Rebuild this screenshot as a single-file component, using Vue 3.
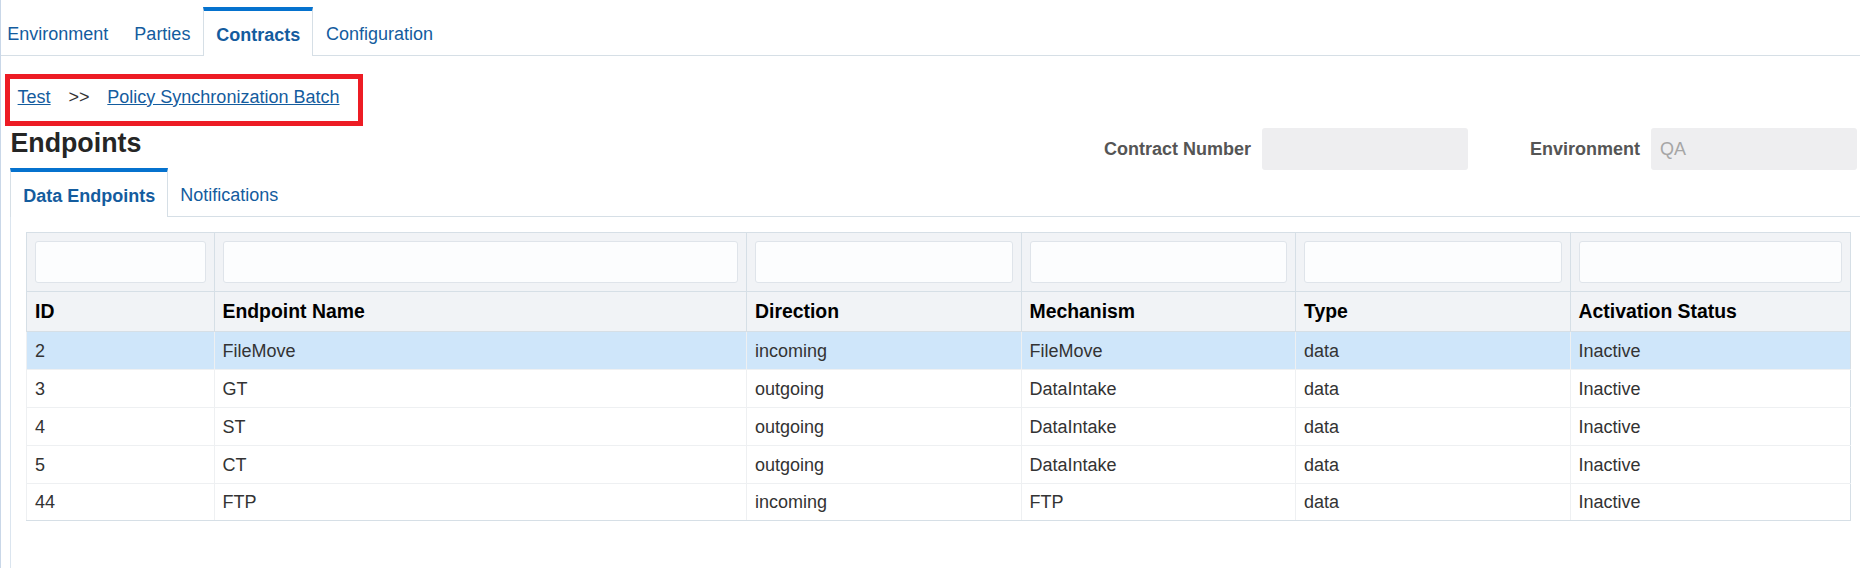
<script setup>
const topTabs = [
  { label: 'Environment' },
  { label: 'Parties' },
  { label: 'Contracts', active: true },
  { label: 'Configuration' }
]
const subTabs = [
  { label: 'Data Endpoints', active: true },
  { label: 'Notifications' }
]
const columns = [
  { label: 'ID', width: 187.5 },
  { label: 'Endpoint Name', width: 532.5 },
  { label: 'Direction', width: 274.5 },
  { label: 'Mechanism', width: 274.5 },
  { label: 'Type', width: 274.5 },
  { label: 'Activation Status', width: 280.5 }
]
const rows = [
  { id: 2, name: 'FileMove', direction: 'incoming', mechanism: 'FileMove', selected: true },
  { id: 3, name: 'GT', direction: 'outgoing', mechanism: 'DataIntake' },
  { id: 4, name: 'ST', direction: 'outgoing', mechanism: 'DataIntake' },
  { id: 5, name: 'CT', direction: 'outgoing', mechanism: 'DataIntake' },
  { id: 44, name: 'FTP', direction: 'incoming', mechanism: 'FTP' }
]
</script>

<template>
  <div class="page">
    <nav class="tabs top-tabs">
      <a v-for="t in topTabs" :key="t.label" class="tab" :class="{ active: t.active }">{{ t.label }}</a>
    </nav>

    <div class="crumbs">
      <a class="crumb">Test</a>
      <span class="sep">&gt;&gt;</span>
      <a class="crumb">Policy Synchronization Batch</a>
    </div>

    <header class="head">
      <h1 class="title">Endpoints</h1>
      <div class="fields">
        <label class="field">
          <span class="field-label">Contract Number</span>
          <span class="field-value"></span>
        </label>
        <label class="field">
          <span class="field-label">Environment</span>
          <span class="field-value">QA</span>
        </label>
      </div>
    </header>

    <nav class="tabs sub-tabs">
      <a v-for="t in subTabs" :key="t.label" class="tab" :class="{ active: t.active }">{{ t.label }}</a>
    </nav>

    <section class="panel">
      <table class="grid">
        <colgroup>
          <col v-for="c in columns" :key="c.label" :style="{ width: c.width + 'px' }" />
        </colgroup>
        <thead>
          <tr class="filter-row">
            <th v-for="c in columns" :key="c.label"><div class="filter"></div></th>
          </tr>
          <tr class="label-row">
            <th v-for="c in columns" :key="c.label">{{ c.label }}</th>
          </tr>
        </thead>
        <tbody>
          <tr v-for="r in rows" :key="r.id" :class="{ selected: r.selected }">
            <td>{{ r.id }}</td>
            <td>{{ r.name }}</td>
            <td>{{ r.direction }}</td>
            <td>{{ r.mechanism }}</td>
            <td>data</td>
            <td>Inactive</td>
          </tr>
        </tbody>
      </table>
    </section>
  </div>
</template>

<style>
html, body { margin: 0; background: #fff; }
</style>

<style scoped>
.page {
  box-sizing: border-box;
  width: 1865px;
  height: 568px;
  overflow: hidden;
  border-left: 1px solid #c9d7e8;
  padding-right: 5px;
  font-family: "Liberation Sans", Arial, sans-serif;
  font-size: 18px;
  color: #333;
  background: #fff;
  display: flex;
  flex-direction: column;
}
.tabs {
  display: flex;
  align-items: stretch;
  border-bottom: 1px solid #d6dfe6;
  box-sizing: border-box;
  height: 49px;
  flex: none;
}
.top-tabs { margin-top: 7px; }
.tab {
  box-sizing: border-box;
  padding: 3px 13px 0;
  display: flex;
  align-items: center;
  color: #145c9e;
  border-top: 4px solid transparent;
  white-space: nowrap;
}
.top-tabs .tab:first-child { padding-left: 6.3px; }
.tab.active {
  height: 49px;
  padding: 3px 11.8px 0;
  font-weight: 700;
  background: #fff;
  border-top-color: #0572ce;
  border-left: 1px solid #d6dfe6;
  border-right: 1px solid #d6dfe6;
}
.crumbs {
  box-sizing: border-box;
  flex: none;
  margin: 18px 0 0 4px;
  width: 358px;
  height: 52px;
  border: 5px solid #ed1c24;
  padding: 0 0 6px 7.6px;
  display: flex;
  align-items: center;
}
.crumb {
  color: #145c9e;
  text-decoration: underline;
}
.sep {
  margin: 0 17.7px 0 18px;
  color: #333;
}
.head {
  flex: none;
  display: flex;
  justify-content: space-between;
  align-items: flex-start;
  height: 42px;
  padding-right: 3px;
}
.title {
  margin: 0 0 0 9.4px;
  font-size: 26.8px;
  line-height: 32px;
  padding-top: 1px;
  font-weight: 700;
  color: #252525;
}
.fields {
  display: flex;
  gap: 62px;
  padding-top: 2px;
}
.field {
  display: flex;
  align-items: center;
  gap: 11px;
}
.field-label {
  font-weight: 700;
  color: #555;
}
.field-value {
  box-sizing: border-box;
  width: 206px;
  height: 42px;
  padding-left: 9px;
  line-height: 42px;
  border-radius: 3px;
  background: #eeeef0;
  color: #a6a6a6;
}
.sub-tabs { margin-left: 9px; }
.sub-tabs .tab { padding-left: 12.6px; }
.sub-tabs .tab.active { padding-left: 12.3px; padding-right: 11.3px; }
.panel {
  flex: 1;
  margin-left: 9px;
  border-left: 1px solid #dbe5ef;
  padding: 15px 0 0 15px;
}
.grid {
  table-layout: fixed;
  width: 1824px;
  border-collapse: collapse;
  border: 1px solid #d6dfe6;
}
.grid th, .grid td {
  box-sizing: border-box;
  padding: 0 8px;
  text-align: left;
  border-left: 1px solid #d6dfe6;
}
.filter-row th {
  height: 59px;
  background: #f1f3f6;
  border-bottom: 1px solid #d6dfe6;
}
.filter {
  box-sizing: border-box;
  height: 41.5px;
  border: 1px solid #dfe4ea;
  border-radius: 3px;
  background: #fcfdfe;
}
.label-row th {
  height: 40px;
  background: #f1f3f6;
  color: #000;
  font-size: 19.4px;
  font-weight: 700;
  border-bottom: 1px solid #d6dfe6;
}
.grid td {
  height: 38px;
  padding-top: 1px;
  border-left-color: #eef0f2;
  border-bottom: 1px solid #eef0f2;
}
.grid tbody tr:last-child td {
  height: 37px;
  border-bottom-color: #d6dfe6;
}
.grid tr.selected td {
  background: #cfe6fa;
}
</style>
